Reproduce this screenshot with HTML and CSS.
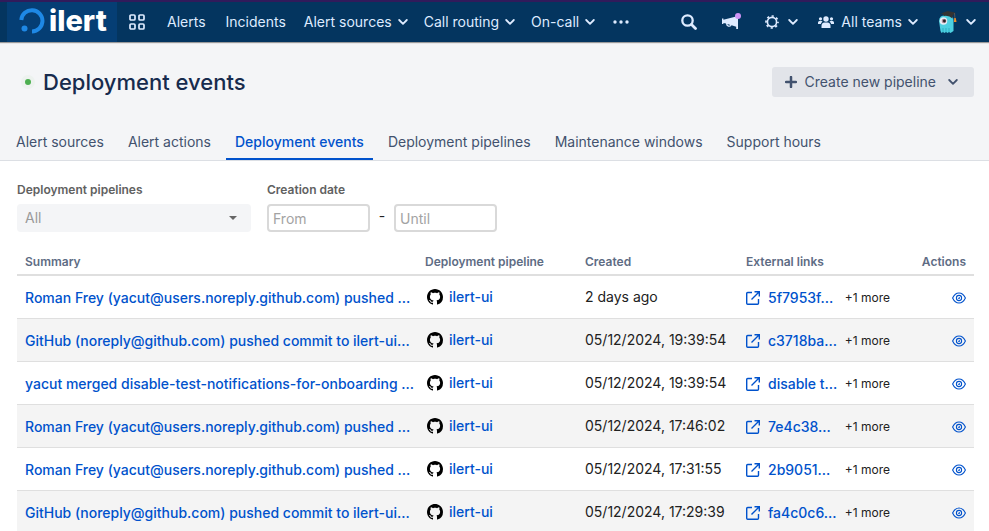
FILE: index.html
```html
<!DOCTYPE html>
<html lang="en">
<head>
<meta charset="utf-8">
<title>Deployment events</title>
<link rel="stylesheet" href="styles.css">
</head>
<body>
<svg class="defs" aria-hidden="true">
  <symbol id="chevron" viewBox="0 0 10 10"><path d="M1.2 3 5 6.8 8.8 3" fill="none" stroke="currentColor" stroke-width="1.8" stroke-linecap="round" stroke-linejoin="round"/></symbol>
  <symbol id="github" viewBox="0 0 16 16"><path fill="#000" fill-rule="evenodd" d="M8 0C3.58 0 0 3.58 0 8c0 3.54 2.29 6.53 5.47 7.59.4.07.55-.17.55-.38 0-.19-.01-.82-.01-1.49-2.01.37-2.53-.49-2.69-.94-.09-.23-.48-.94-.82-1.13-.28-.15-.68-.52-.01-.53.63-.01 1.08.58 1.23.82.72 1.21 1.87.87 2.33.66.07-.52.28-.87.51-1.07-1.78-.2-3.64-.89-3.64-3.95 0-.87.31-1.59.82-2.15-.08-.2-.36-1.02.08-2.12 0 0 .67-.21 2.2.82.64-.18 1.32-.27 2-.27s1.36.09 2 .27c1.53-1.04 2.2-.82 2.2-.82.44 1.1.16 1.92.08 2.12.51.56.82 1.27.82 2.15 0 3.07-1.87 3.75-3.65 3.95.29.25.54.73.54 1.48 0 1.07-.01 1.93-.01 2.2 0 .21.15.46.55.38A8.01 8.01 0 0 0 16 8c0-4.42-3.58-8-8-8z"/></symbol>
  <symbol id="external" viewBox="0 0 14 14"><path d="M6 1.5H1.7a1 1 0 0 0-1 1v9.8a1 1 0 0 0 1 1h9.8a1 1 0 0 0 1-1V8M8.5.8h4.8v4.8M13 1 5.5 8.5" fill="none" stroke="currentColor" stroke-width="1.4"/></symbol>
  <symbol id="eye" viewBox="0 0 14 12"><path d="M.6 6C2 3 4.200 1 7 1s5 2 6.400 5C12 9 9.800 11 7 11S2 9 .6 6z" fill="none" stroke="currentColor" stroke-width="1.100"/><circle cx="7" cy="6" r="2.600" fill="none" stroke="currentColor" stroke-width="1.100"/><path d="M7 5A1 1 0 1 1 6 6 1 1 0 0 0 7 5z" fill="currentColor"/></symbol>
</svg>

<header class="topbar">
  <a class="brand" href="#">
    <svg class="brand-mark" viewBox="0 0 26 26" aria-hidden="true"><path d="M2.300 12A10.600 10.600 0 1 1 13 23.400" fill="none" stroke="#1e88e5" stroke-width="4"/><circle cx="5.500" cy="20.500" r="3" fill="#1e88e5"/></svg>
    <span class="brand-name">ilert</span>
  </a>
  <nav class="nav">
    <button class="nav-item apps" aria-label="Apps"><svg width="16" height="16" viewBox="0 0 16 16" fill="none" stroke="currentColor" stroke-width="1.700"><rect x="1" y="1" width="5" height="5" rx="1"/><rect x="10" y="1" width="5" height="5" rx="1"/><rect x="1" y="10" width="5" height="5" rx="1"/><rect x="10" y="10" width="5" height="5" rx="1"/></svg></button>
    <a class="nav-item" href="#">Alerts</a>
    <a class="nav-item" href="#">Incidents</a>
    <button class="nav-item menu">Alert sources <svg class="chev"><use href="#chevron"/></svg></button>
    <button class="nav-item menu">Call routing <svg class="chev"><use href="#chevron"/></svg></button>
    <button class="nav-item menu">On-call <svg class="chev"><use href="#chevron"/></svg></button>
    <button class="nav-item" aria-label="More"><svg width="16" height="4" viewBox="0 0 16 4" fill="currentColor"><circle cx="2" cy="2" r="1.700"/><circle cx="8" cy="2" r="1.700"/><circle cx="14" cy="2" r="1.700"/></svg></button>
  </nav>
  <div class="nav tools">
    <button class="nav-item" aria-label="Search"><svg width="16" height="16" viewBox="0 0 16 16" fill="none" stroke="currentColor"><circle cx="6.500" cy="6.500" r="5.200" stroke-width="2.300"/><path d="m10.500 10.500 4 4" stroke-width="2.800" stroke-linecap="round"/></svg></button>
    <button class="nav-item news" aria-label="News"><svg width="20" height="20" viewBox="0 0 20 20"><path fill="currentColor" d="M15.200 4h1.800v13h-1.800v-2.200L10.600 13.300a3 3 0 0 1-5.600-1.700L2.400 11v1H1V6.500h1.400v1.200l12.800-3.200zM6.500 12a1.600 1.600 0 0 0 2.900.9z"/><circle cx="17" cy="4" r="3" fill="#ce93f5"/></svg></button>
    <button class="nav-item" aria-label="Settings"><svg width="14" height="14" viewBox="0 0 14 14" fill="none" stroke="currentColor"><circle cx="7" cy="7" r="4.600" stroke-width="1.700"/><circle cx="7" cy="7" r="6" stroke-width="1.700" stroke-dasharray="2.200 2.512" stroke-dashoffset="1.100"/></svg><svg class="chev wide"><use href="#chevron"/></svg></button>
    <button class="nav-item teams"><svg width="16" height="12" viewBox="0 0 16 12" fill="currentColor"><circle cx="8" cy="3" r="2.700"/><circle cx="2.500" cy="2.800" r="1.600"/><circle cx="13.500" cy="2.800" r="1.600"/><path d="M3.500 12v-2.200A3.300 3.300 0 0 1 6.500 6.600h3a3.300 3.300 0 0 1 3 3.200V12zM0 8V6.500A1.500 1.500 0 0 1 1.500 5h2a2 2 0 0 1 1 .4A4.500 4.500 0 0 0 2.800 8zM16 8V6.500A1.500 1.500 0 0 0 14.500 5h-2a2 2 0 0 0-1 .4A4.500 4.500 0 0 1 13.200 8z"/></svg><span class="team-name">All teams</span> <svg class="chev"><use href="#chevron"/></svg></button>
    <button class="nav-item account" aria-label="Account"><svg width="20" height="24" viewBox="0 0 20 24"><path d="M1 11q0-6 7.500-6t7 6v10l-1.500 1-1.500 1-1.500-1-1.500 1-1.500-1-1.500 1-1.500-1-1.500 1L2.500 21z" fill="#4dd0e1"/><path d="M5 18v4M8 18v4M11 18v4" stroke="#2fb0c4"/><path d="m3 3.500 6.500-2.500 7.500 1.500-2.500 3.500v2.500Q11 5 5.500 6V4.500z" fill="#333"/><path d="M16.500 3 17 9" stroke="#555" fill="none"/><path d="M16.300 8h1.400l.8 4h-2.600z" fill="#f08c28"/><circle cx="5.500" cy="11" r="3.800" fill="#e8edf5"/><circle cx="6" cy="11" r="2.300" fill="#b08a98"/><circle cx="6.400" cy="11" r="1.400" fill="#222"/></svg><svg class="chev"><use href="#chevron"/></svg></button>
  </div>
</header>

<section class="page-head">
  <div class="title-row">
    <span class="status"></span>
    <h1>Deployment events</h1>
    <button class="create"><svg width="12" height="12" viewBox="0 0 12 12"><path d="M6 1v10M1 6h10" stroke="currentColor" stroke-width="2.500" stroke-linecap="round"/></svg><span class="create-text">Create new pipeline</span><svg class="chev"><use href="#chevron"/></svg></button>
  </div>
  <nav class="tabs">
    <a href="#">Alert sources</a>
    <a href="#">Alert actions</a>
    <a href="#" class="active">Deployment events</a>
    <a href="#">Deployment pipelines</a>
    <a href="#">Maintenance windows</a>
    <a href="#">Support hours</a>
  </nav>
</section>

<main class="content">
  <form class="filters">
    <div class="field">
      <label for="pipelines">Deployment pipelines</label>
      <select id="pipelines"><option>All</option></select>
    </div>
    <div class="field">
      <label for="from">Creation date</label>
      <div class="range">
        <input id="from" type="text" placeholder="From">
        <span class="dash">-</span>
        <input type="text" placeholder="Until" aria-label="Until">
      </div>
    </div>
  </form>

  <table class="events">
    <colgroup><col class="c-summary"><col class="c-pipeline"><col class="c-created"><col class="c-links"><col class="c-actions"></colgroup>
    <thead>
      <tr><th>Summary</th><th>Deployment pipeline</th><th>Created</th><th>External links</th><th>Actions</th></tr>
    </thead>
    <tbody>
      <tr>
        <td><a href="#">Roman Frey (yacut@users.noreply.github.com) pushed ...</a></td>
        <td><a class="pipeline" href="#"><svg class="gh"><use href="#github"/></svg>ilert-ui</a></td>
        <td>2 days ago</td>
        <td><div class="links"><a href="#"><svg class="ext"><use href="#external"/></svg>5f7953f...</a><span class="more">+1 more</span></div></td>
        <td><button class="view" aria-label="View"><svg><use href="#eye"/></svg></button></td>
      </tr>
      <tr>
        <td><a href="#">GitHub (noreply@github.com) pushed commit to ilert-ui...</a></td>
        <td><a class="pipeline" href="#"><svg class="gh"><use href="#github"/></svg>ilert-ui</a></td>
        <td>05/12/2024, 19:39:54</td>
        <td><div class="links"><a href="#"><svg class="ext"><use href="#external"/></svg>c3718ba...</a><span class="more">+1 more</span></div></td>
        <td><button class="view" aria-label="View"><svg><use href="#eye"/></svg></button></td>
      </tr>
      <tr>
        <td><a href="#">yacut merged disable-test-notifications-for-onboarding ...</a></td>
        <td><a class="pipeline" href="#"><svg class="gh"><use href="#github"/></svg>ilert-ui</a></td>
        <td>05/12/2024, 19:39:54</td>
        <td><div class="links"><a href="#"><svg class="ext"><use href="#external"/></svg>disable t...</a><span class="more">+1 more</span></div></td>
        <td><button class="view" aria-label="View"><svg><use href="#eye"/></svg></button></td>
      </tr>
      <tr>
        <td><a href="#">Roman Frey (yacut@users.noreply.github.com) pushed ...</a></td>
        <td><a class="pipeline" href="#"><svg class="gh"><use href="#github"/></svg>ilert-ui</a></td>
        <td>05/12/2024, 17:46:02</td>
        <td><div class="links"><a href="#"><svg class="ext"><use href="#external"/></svg>7e4c38...</a><span class="more">+1 more</span></div></td>
        <td><button class="view" aria-label="View"><svg><use href="#eye"/></svg></button></td>
      </tr>
      <tr>
        <td><a href="#">Roman Frey (yacut@users.noreply.github.com) pushed ...</a></td>
        <td><a class="pipeline" href="#"><svg class="gh"><use href="#github"/></svg>ilert-ui</a></td>
        <td>05/12/2024, 17:31:55</td>
        <td><div class="links"><a href="#"><svg class="ext"><use href="#external"/></svg>2b9051...</a><span class="more">+1 more</span></div></td>
        <td><button class="view" aria-label="View"><svg><use href="#eye"/></svg></button></td>
      </tr>
      <tr>
        <td><a href="#">GitHub (noreply@github.com) pushed commit to ilert-ui...</a></td>
        <td><a class="pipeline" href="#"><svg class="gh"><use href="#github"/></svg>ilert-ui</a></td>
        <td>05/12/2024, 17:29:39</td>
        <td><div class="links"><a href="#"><svg class="ext"><use href="#external"/></svg>fa4c0c6...</a><span class="more">+1 more</span></div></td>
        <td><button class="view" aria-label="View"><svg><use href="#eye"/></svg></button></td>
      </tr>
    </tbody>
  </table>
</main>
</body>
</html>
```
FILE: styles.css
```css
* { box-sizing: border-box; }

body {
  margin: 0;
  height: 100vh;
  overflow: hidden;
  background: #fff;
  color: #212121;
  font: 14px/20px Inter, "Liberation Sans", sans-serif;
}

a { text-decoration: none; color: #0052cc; }
button { font: inherit; border: 0; background: none; cursor: pointer; }
svg { display: block; flex: none; }
.defs { position: absolute; width: 0; height: 0; }
.chev { width: 10px; height: 10px; margin-left: 6px; }
.chev.wide { margin-left: 9px; }

.topbar {
  display: flex;
  height: 42px;
  padding: 0 3px 0 7px;
  border-top: 2px solid #311b5b;
  background: #04355f;
  box-shadow: 0 1px 1px #9a9a9a;
  position: relative;
}
.brand {
  display: flex;
  align-items: center;
  gap: 4px;
  width: 110px;
  padding: 0 0 2px 12px;
  background: #053e74;
}
.brand-mark { width: 26px; height: 26px; }
.brand-name { color: #fff; font: 800 29px/36px Inter, sans-serif; }
.nav { display: flex; }
.nav-item {
  display: flex;
  align-items: center;
  padding: 0 10px;
  color: #deebff;
  white-space: nowrap;
}
.nav-item.apps { padding: 0 12px; }
.nav-item.menu { padding: 0 8px; }
.tools { margin-left: auto; }
.nav-item.news { padding: 0 14px; }
.nav-item.account { gap: 2px; }
.team-name { margin-left: 7px; }

.page-head {
  background: #f4f5f7;
  border-bottom: 1px solid #dcdfe4;
}
.title-row {
  display: flex;
  align-items: center;
  padding: 25px 15px 0 21px;
}
.status {
  width: 14px;
  height: 14px;
  border: 4px solid #edf2ef;
  border-radius: 50%;
  background: #4caf50;
}
h1 {
  margin: 0 0 0 8px;
  color: #172b4d;
  font-size: 22px;
  font-weight: 500;
  line-height: 30px;
}
.create {
  display: flex;
  align-items: center;
  height: 30px;
  margin-left: auto;
  padding: 0 16px 0 13px;
  border-radius: 3px;
  background: #e2e4e9;
  color: #42526e;
}
.create-text { margin: 0 6px 0 8px; }
.tabs {
  display: flex;
  gap: 6px;
  padding: 27px 7px 0;
}
.tabs a {
  padding: 8px 9px 6px;
  border-bottom: 2px solid transparent;
  color: #42526e;
  white-space: nowrap;
}
.tabs .active { border-color: #0052cc; color: #0052cc; font-weight: 500; }

.content { padding: 19px 15px 0 17px; }
.filters { display: flex; gap: 16px; }
.field { display: flex; flex-direction: column; gap: 4px; }
.field label {
  color: #616161;
  font-size: 12px;
  font-weight: 600;
}
.field select, .field input {
  height: 28px;
  margin: 0;
  font: inherit;
}
.field select {
  appearance: none;
  width: 234px;
  padding: 0 8px;
  border: 0;
  border-radius: 4px;
  color: #9a9a9a;
  background: #f4f5f7 url("data:image/svg+xml,%3Csvg xmlns='http://www.w3.org/2000/svg' width='8' height='4'%3E%3Cpath d='M0 0h8L4 4z' fill='%23666'/%3E%3C/svg%3E") no-repeat right 14px center;
}
.field input {
  width: 103px;
  padding: 0 4px;
  border: 2px solid #d9d9d9;
  border-radius: 4px;
}
.field input::placeholder { color: #a3a3a3; opacity: 1; }
.range { display: flex; }
.dash { width: 24px; line-height: 24px; text-align: center; }

.events {
  width: 100%;
  margin-top: 16px;
  table-layout: fixed;
  border-collapse: separate;
  border-spacing: 0;
}
.c-summary { width: 400px; }
.c-pipeline { width: 160px; }
.c-created { width: 161px; }
.c-links { width: 160px; }
.events th {
  height: 28px;
  padding: 2px 8px 0;
  border-bottom: 2px solid #dfdfdf;
  color: #5e6c84;
  font-size: 12px;
  font-weight: 600;
  text-align: left;
}
.events td {
  height: 43px;
  padding: 2px 8px 0;
  border-bottom: 1px solid #dfdfdf;
  white-space: nowrap;
}
.events td:nth-child(2), .events td:nth-child(3) { padding-top: 0; }
.events a { font-weight: 500; }
.events tr:nth-child(even) td { background: #f4f4f4; }
.events th:last-child { text-align: right; }
.pipeline { display: flex; align-items: center; }
.gh { width: 16px; height: 16px; margin: 0 6px 0 2px; }
.links { display: flex; align-items: center; }
.links a { display: flex; align-items: center; width: 99px; }
.ext { width: 14px; height: 14px; margin-right: 8px; }
.more { font-size: 12px; }
.view { display: block; margin-left: auto; padding: 0; color: #0052cc; }
.view svg { width: 14px; height: 12px; }
```
